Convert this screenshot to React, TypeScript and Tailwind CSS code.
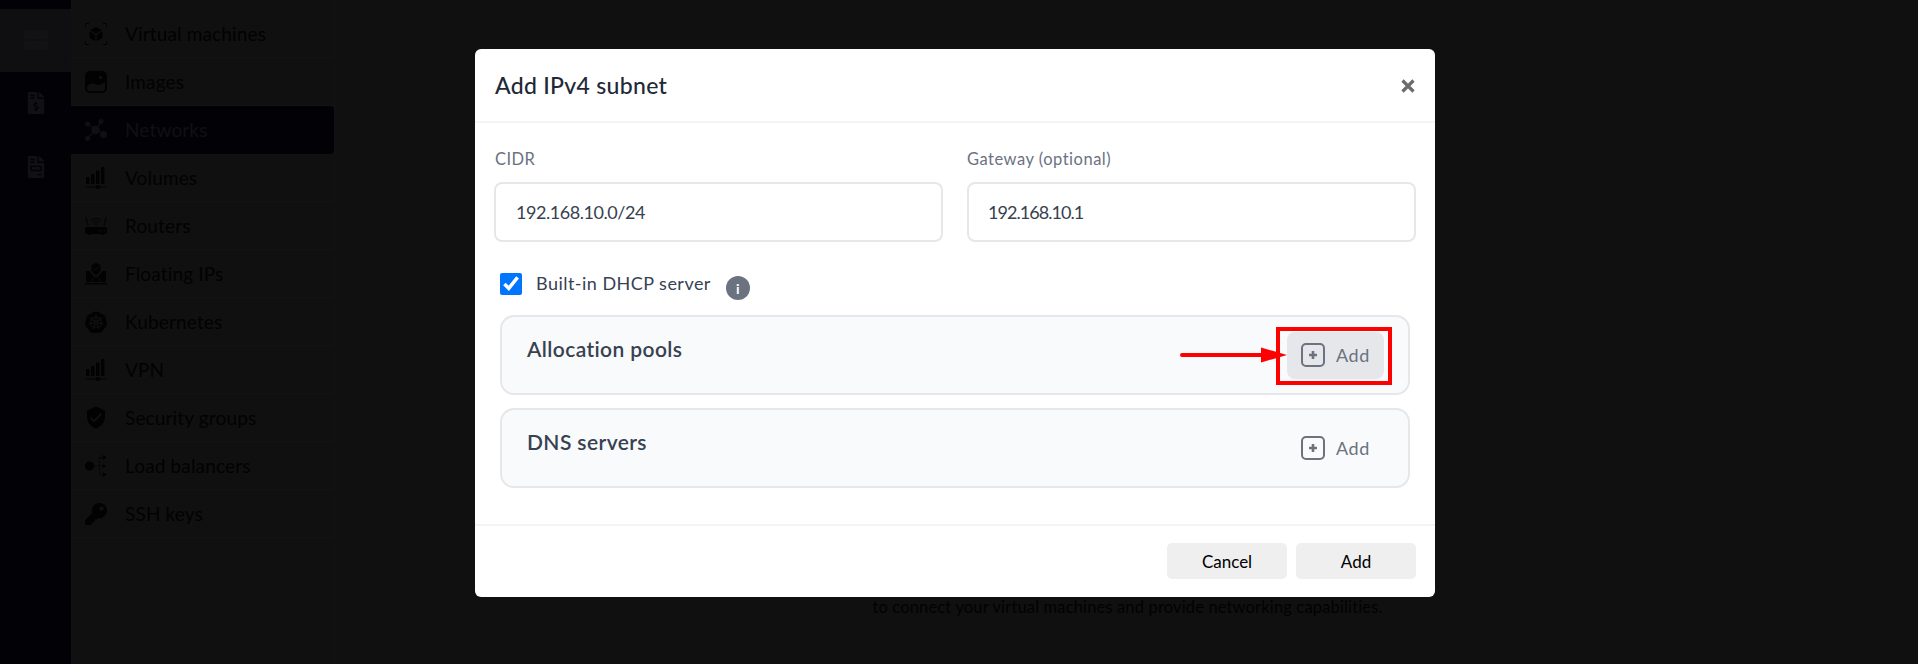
import { FaFileInvoice, FaFileInvoiceDollar, FaKey } from "react-icons/fa";
import { MdVerifiedUser } from "react-icons/md";
import { SiKubernetes } from "react-icons/si";

const CubeIcon = () => (
  <svg viewBox="0 0 22 22" className="w-[22px] h-[22px]" fill="none" stroke="currentColor" strokeWidth="1">
    <path d="M.5 4V.5H4M18 .5h3.500V4M21.500 18v3.500H18M4 21.500H.5V18" />
    <path d="M11 4l6 3.200-6 3.300-6-3.300zM4.500 8.500l5.800 3.200v6.500l-5.800-3.200zM17.500 8.500l-5.800 3.200v6.500l5.800-3.200z" fill="currentColor" stroke="none" />
  </svg>
);
const ImageIcon = () => (
  <svg viewBox="0 0 22 22" className="w-[22px] h-[22px]" fill="currentColor">
    <path fillRule="evenodd" d="M5 0h12a5 5 0 0 1 5 5v12a5 5 0 0 1-5 5H5a5 5 0 0 1-5-5V5a5 5 0 0 1 5-5zM2 16c2-3.500 5-4.500 8-3 3 1.500 5 1 10-1.500V17a3 3 0 0 1-3 3H5a3 3 0 0 1-3-3z" />
    <circle cx="15.500" cy="6.500" r="1.800" fill="#101010" />
  </svg>
);
const NetworkIcon = () => (
  <svg viewBox="0 0 22 22" className="w-[22px] h-[22px]" fill="currentColor" stroke="currentColor">
    <path d="M11 11L2.500 5M11 11l5-8.500M11 11l8 4M11 11l-8.500 8" strokeWidth="1.500" />
    <circle cx="10.500" cy="11" r="4.200" stroke="none" />
    <circle cx="2.500" cy="5" r="2.500" stroke="none" />
    <circle cx="16" cy="2.500" r="2.500" stroke="none" />
    <circle cx="18.500" cy="15.500" r="3.500" stroke="none" />
    <circle cx="2.500" cy="19.500" r="2.500" stroke="none" />
  </svg>
);
const BarsIcon = () => (
  <svg viewBox="0 0 22 22" className="w-[22px] h-[22px]" fill="currentColor">
    <rect x="1" y="10" width="3.500" height="7" />
    <rect x="6" y="7" width="3.500" height="10" />
    <rect x="11" y="3.500" width="3.500" height="13.500" />
    <rect x="16" y="0" width="3.500" height="17" />
    <rect x="0" y="19.500" width="22" height="1" />
    <circle cx="13" cy="20" r="2" />
  </svg>
);
const RouterIcon = () => (
  <svg viewBox="0 0 22 22" className="w-[22px] h-[22px]" fill="none" stroke="currentColor" strokeWidth="1">
    <path d="M6 5.500a7 7 0 0 1 10 0M7.800 7.500a4.500 4.500 0 0 1 6.400 0M9.500 9.500a2 2 0 0 1 3 0M.8 2l2.200 9M21.200 2L19 11" />
    <path fillRule="evenodd" d="M2 12h18a2 2 0 0 1 2 2v3a2 2 0 0 1-2 2h-1v1h-3v-1H6v1H3v-1H2a2 2 0 0 1-2-2v-3a2 2 0 0 1 2-2z" fill="currentColor" stroke="none" />
    <path d="M14 15.500h1M16.500 15.500h1M19 15.500h1" stroke="#101010" strokeWidth="1.500" />
  </svg>
);
const FloatingIcon = () => (
  <svg viewBox="0 0 22 22" className="w-[22px] h-[22px]" fill="currentColor">
    <path d="M11 0l4.500 2v4c0 3-2 5-4.500 6-2.500-1-4.500-3-4.500-6V2z" />
    <path d="M8.500 5l2 2 3-3" fill="none" stroke="#101010" strokeWidth="1" />
    <path d="M1 8h4c.3 2.500 2.500 5 6 6 3.500-1 5.700-3.500 6-6h4v11H1z" />
    <path d="M7 18c0-2.500 2-4 4-4s4 1.500 4 4" fill="none" stroke="#101010" strokeWidth="1" />
    <rect x="0" y="20" width="22" height="1.500" />
  </svg>
);
const BalancerIcon = () => (
  <svg viewBox="0 0 22 22" className="w-[22px] h-[22px]" fill="currentColor">
    <circle cx="4.500" cy="11" r="4.500" />
    <path d="M9 11h6M14.500 2.500v17M14.500 2.500H17M14.500 19.500H17" fill="none" stroke="currentColor" strokeWidth="1" strokeDasharray="2 1.500" />
    <path d="M17.500 0l4 2.500-4 2.500zM17.500 17l4 2.500-4 2.500zM17.500 9l4 2-4 2z" />
  </svg>
);
const ServerIcon = () => (
  <svg viewBox="0 0 24 20" className="w-6 h-5" fill="#121214">
    <rect width="24" height="9" rx="1.500" />
    <rect y="11" width="24" height="9" rx="1.500" />
  </svg>
);
const PlusBox = () => (
  <svg viewBox="0 0 24 24" className="w-6 h-6" fill="none" stroke="#6b7280">
    <rect x="1" y="1" width="22" height="22" rx="4" strokeWidth="2" />
    <path d="M12 8v8M8 12h8" strokeWidth="2.600" />
  </svg>
);

const rows = [
  { label: "Virtual machines", icon: <CubeIcon /> },
  { label: "Images", icon: <ImageIcon /> },
  { label: "Networks", icon: <NetworkIcon />, active: true },
  { label: "Volumes", icon: <BarsIcon /> },
  { label: "Routers", icon: <RouterIcon /> },
  { label: "Floating IPs", icon: <FloatingIcon /> },
  { label: "Kubernetes", icon: <SiKubernetes size={22} /> },
  { label: "VPN", icon: <BarsIcon /> },
  { label: "Security groups", icon: <MdVerifiedUser size={25} className="-m-px" /> },
  { label: "Load balancers", icon: <BalancerIcon /> },
  { label: "SSH keys", icon: <FaKey size={22} /> },
];

function Section({ title, hover }: { title: string; hover?: boolean }) {
  return (
    <div className="h-20 rounded-[14px] border-2 border-[#e5e7eb] bg-[#f9fafb] mx-1.5 pl-[25px] pr-[24px] flex justify-between items-start pt-[15px]">
      <h3 className="text-[21px] leading-[34px] font-semibold text-[#374151] tracking-[0.4px]">{title}</h3>
      <button className={`h-[47px] w-[97px] rounded-lg flex items-center gap-[11px] pl-[14px] pb-[1px] text-[18px] text-[#6b7280] tracking-[0.55px] ${hover ? "bg-[#e5e7eb]" : ""}`}>
        <PlusBox />
        Add
      </button>
    </div>
  );
}

export default function App() {
  return (
    <div className="relative h-[664px] w-full overflow-hidden flex bg-[#101010] text-[#020202]" style={{ fontFamily: "Lato, 'Noto Sans', sans-serif" }}>
      <aside className="w-[71px] shrink-0 bg-[#020206] pt-[9px] flex flex-col items-center">
        <div className="w-full h-[63px] bg-[#0f0f11] flex items-center justify-center pb-[2px]">
          <ServerIcon />
        </div>
        <div className="mt-[20px] h-[22px] text-[#111113]"><FaFileInvoiceDollar size={22} /></div>
        <div className="mt-[42px] h-[22px] text-[#111113]"><FaFileInvoice size={22} /></div>
      </aside>
      <nav className="w-[264px] shrink-0 pt-[10px] border-r border-[#121212]">
        {rows.map((r) => (
          <div
            key={r.label}
            className={`h-12 flex items-center gap-[18px] pl-[14px] text-[19px] tracking-[0.15px] ${r.active ? "bg-[#020206] rounded-r-sm text-[#101013]" : "border-b border-[#131313]"}`}
          >
            <span className="w-[22px] h-[22px] flex items-center justify-center">{r.icon}</span>
            <span className="pt-px">{r.label}</span>
          </div>
        ))}
      </nav>
      <main className="flex-1 flex flex-col items-center justify-start pt-[595px]">
        <p className="text-[16.500px] leading-[24px] tracking-[0.15px] ml-[2px]">to connect your virtual machines and provide networking capabilities.</p>
      </main>

      <div className="absolute left-[475px] top-[49px] w-[960px] h-[548px] bg-white rounded-md flex flex-col">
        <header className="h-[74px] shrink-0 border-b-2 border-[#f3f4f6] flex items-center justify-between pl-5 pr-[20px]">
          <h2 className="text-[23px] font-medium text-[#1f2937] tracking-[0.3px]">Add IPv4 subnet</h2>
          <svg viewBox="0 0 14 14" className="w-3.5 h-3.5 mt-[2px]" stroke="#6b6b6b" strokeWidth="3.200" fill="none">
            <path d="M1.500 1.500l11 11M12.500 1.500l-11 11" />
          </svg>
        </header>
        <div className="flex-1 px-[19px] pt-[25px]">
          <div className="grid grid-cols-2 gap-6">
            <label className="block">
              <span className="block text-[16.500px] leading-[22px] pl-px text-[#6b7280] mb-[12px] tracking-[0.45px]">CIDR</span>
              <div className="h-[60px] rounded-lg border-2 border-[#e5e7eb] flex items-center pl-[20px] text-[18px] text-[#374151] tracking-[-0.45px]">192.168.10.0/24</div>
            </label>
            <label className="block">
              <span className="block text-[16.500px] leading-[22px] text-[#6b7280] mb-[12px] tracking-[0.5px]">Gateway (optional)</span>
              <div className="h-[60px] rounded-lg border-2 border-[#e5e7eb] flex items-center pl-[19px] text-[18px] text-[#374151] tracking-[-0.95px]">192.168.10.1</div>
            </label>
          </div>
          <div className="mt-[31px] h-[28px] ml-[6px] flex items-start mb-[14px]">
            <input type="checkbox" defaultChecked className="w-[22px] h-[22px] m-0 accent-[#0075ff]" />
            <span className="ml-[14px] text-[18px] leading-[20px] text-[#374151] tracking-[0.47px]">Built-in DHCP server</span>
            <span className="ml-[15px] mt-[3px] w-6 h-6 rounded-full bg-[#6b7280] text-white text-[14px] font-bold flex items-center justify-center">i</span>
          </div>
          <div className="flex flex-col gap-[13px]">
            <Section title="Allocation pools" hover />
            <Section title="DNS servers" />
          </div>
        </div>
        <footer className="h-[73px] shrink-0 border-t-2 border-[#f3f4f6] flex justify-end gap-[9px] pr-[19px] pt-[17px]">
          <button className="w-[120px] h-[36px] rounded-[5px] bg-[#efefef] text-[17px] text-black pt-px">Cancel</button>
          <button className="w-[120px] h-[36px] rounded-[5px] bg-[#efefef] text-[17px] text-black pt-px">Add</button>
        </footer>
        <div className="absolute left-[801px] top-[278px] w-[116px] h-[58px] border-4 border-[#ff0000]" />
        <svg viewBox="0 0 107 16" className="absolute left-[705px] top-[298px] w-[107px] h-4">
          <path d="M2 8h80" stroke="#ff0000" strokeWidth="4" strokeLinecap="round" />
          <path d="M81 0.500L107 8 81 15.500z" fill="#ff0000" />
        </svg>
      </div>
    </div>
  );
}
